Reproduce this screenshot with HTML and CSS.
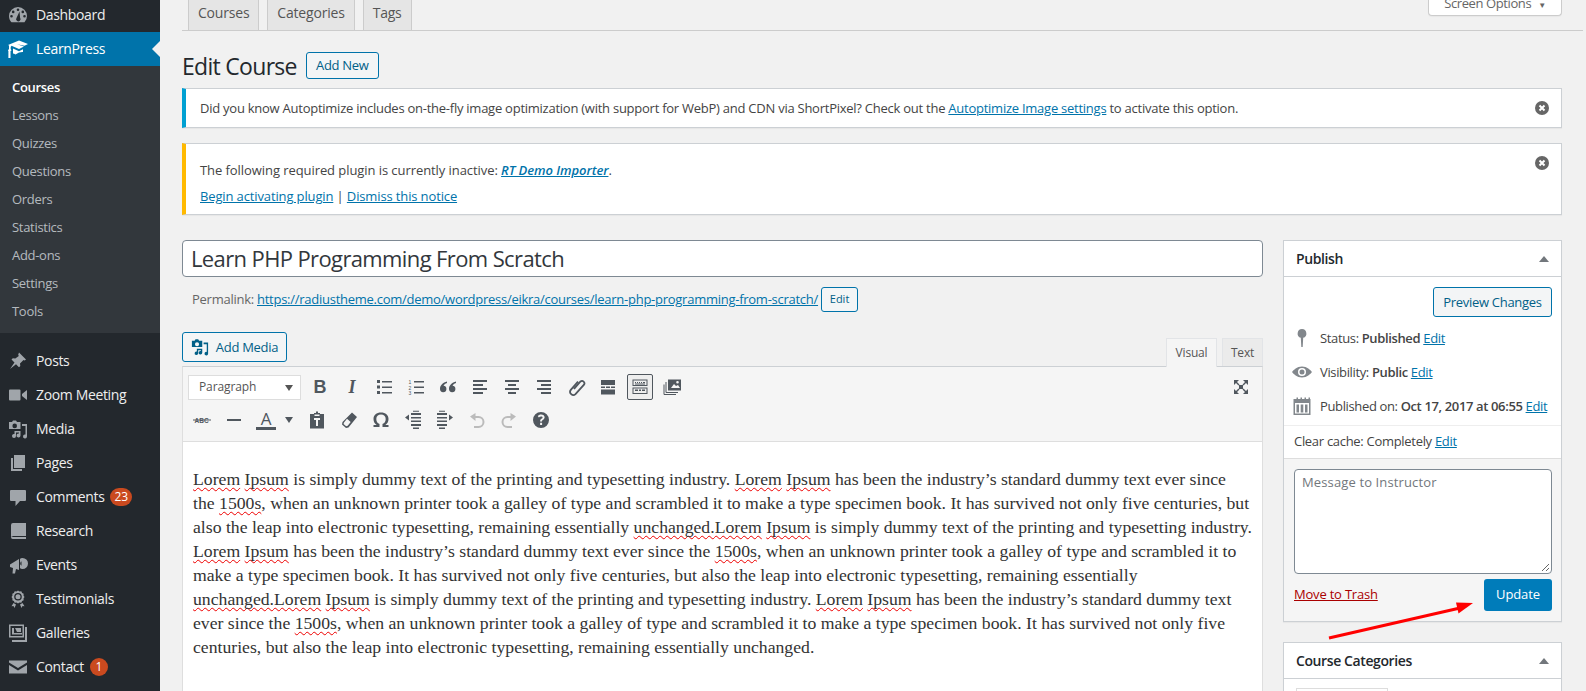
FILE: index.html
```html
<!DOCTYPE html>
<html lang="en">
<head>
<meta charset="utf-8">
<title>Edit Course</title>
<link rel="stylesheet" href="styles.css">
</head>
<body>
<div class="app">
  <aside class="sidebar">
    <a class="item dash"><svg class="mi" viewBox="0 0 20 20"><path d="M10 2a9 9 0 0 0-9 9c0 2.400.9 4.600 2.500 6.300h13A9 9 0 0 0 19 11a9 9 0 0 0-9-9zm0 1.500a1.300 1.300 0 1 1 0 2.600 1.300 1.300 0 0 1 0-2.600zM5.200 5.600a1.300 1.300 0 1 1 0 2.600 1.300 1.300 0 0 1 0-2.600zm9.600 0a1.300 1.300 0 1 1 0 2.600 1.300 1.300 0 0 1 0-2.600zM3.500 10a1.300 1.300 0 1 1 0 2.600 1.300 1.300 0 0 1 0-2.600zm13 0a1.300 1.300 0 1 1 0 2.600 1.300 1.300 0 0 1 0-2.600zM11.500 6.500l.6 6.300a2.200 2.200 0 1 1-3.600.1z" fill-rule="evenodd"/></svg>Dashboard</a>
    <a class="item active"><svg class="mi" viewBox="0 0 20 20"><path d="M11 1.500 20 5l-3.500 1.700L9 5.300l7 2.200L11 10 3.500 6.800 2.700 8v2l.8 1.500-1 .5V19H.4v-7l-.6-.6L1 10V6.500L0 6zM5 9.500l6 2.700 4-2V13c-2-.2-5 .5-7.500 2.500-1-.7-1.800-1-2.500-1.100z"/></svg>LearnPress</a>
    <nav class="sub">
      <a class="cur">Courses</a><a>Lessons</a><a>Quizzes</a><a>Questions</a><a>Orders</a><a>Statistics</a><a>Add-ons</a><a>Settings</a><a>Tools</a>
    </nav>
    <div class="sep"></div>
    <a class="item"><svg class="mi" viewBox="0 0 20 20"><path d="M11 1.500l7 7-1.300 1-1.200-.5-3.500 3.500.3 2.500-1.300 1.300-3-3L2 18l4.500-6.500-3-3 1.300-1.300 2.500.3L10.800 5l-.6-1.200z"/></svg>Posts</a>
    <a class="item"><svg class="mi" viewBox="0 0 20 20"><path d="M1 5.500q0-1 1-1h9.500q1 0 1 1v9q0 1-1 1H2q-1 0-1-1zM14 9l5-4v10l-5-4z"/></svg>Zoom Meeting</a>
    <a class="item"><svg class="mi" viewBox="0 0 20 20"><path d="M1 3h3l1-1.500h3L9 3h3.500v7H1zm5.700 1.600a2.300 2.300 0 1 0 0 4.600 2.300 2.300 0 0 0 0-4.600zM14 5h5v12.500a2 2 0 1 1-1.500-2V7H14zM6.500 12h6v4.500a2 2 0 1 1-1.500-2v-1h-3V17a2 2 0 1 1-1.500-2z" fill-rule="evenodd"/></svg>Media</a>
    <a class="item"><svg class="mi" viewBox="0 0 20 20"><path d="M6 2h11v13H6zM3 5h2v11h9v2H3z"/></svg>Pages</a>
    <a class="item"><svg class="mi" viewBox="0 0 20 20"><path d="M3 3h14q1 0 1 1v9q0 1-1 1h-5l-4.500 5v-5H3q-1 0-1-1V4q0-1 1-1z"/></svg>Comments<span class="count">23</span></a>
    <a class="item"><svg class="mi" viewBox="0 0 20 20"><path d="M5 2h13v13H5a2 2 0 0 0-2 1.500V4q0-2 2-2zM3 16.500A1.800 1.800 0 0 1 5 16h13v2H5a2 2 0 0 1-2-1.500z"/></svg>Research</a>
    <a class="item"><svg class="mi" viewBox="0 0 20 20"><path d="M2 9.500 11 4v11l-3-1-1 4.500H4.500l.5-5.500-3-1zM14.500 3a5.500 5.500 0 0 1 0 11q-2 0-2.500-1V4q.6-1 2.500-1zm0 3a2.500 2.500 0 0 0-1 4.700V6.300z" fill-rule="evenodd"/></svg>Events</a>
    <a class="item"><svg class="mi" viewBox="0 0 20 20"><path d="M10 1.500l1.500 1 1.800-.2.8 1.600 1.600.8-.2 1.800 1 1.500-1 1.500.2 1.800-1.600.8-.8 1.600-1.800-.2-1.500 1-1.500-1-1.800.2-.8-1.600-1.600-.8.2-1.800-1-1.500 1-1.500-.2-1.800 1.600-.8.8-1.600 1.800.2zM10 4a3.800 3.800 0 1 0 0 7.600A3.800 3.800 0 0 0 10 4zm0 1.300a2.500 2.500 0 1 1 0 5 2.500 2.500 0 0 1 0-5zM5.500 14l2.500 1.500L6.500 19l-1-2-2 .3zM14.500 14l2 3.300-2-.3-1 2-1.500-3.500z" fill-rule="evenodd"/></svg>Testimonials</a>
    <a class="item"><svg class="mi" viewBox="0 0 20 20"><path d="M1 1.500h15v13H1zm1.500 1.500v10h12V3zM4 5h2v5h8v1.500H4zM7 5h6v4H9zM17 4h2v15H4v-2h13z" fill-rule="evenodd"/></svg>Galleries</a>
    <a class="item"><svg class="mi" viewBox="0 0 20 20"><path d="M1 3.500h18v2L10 11 1 5.500zM1 8l9 5.500L19 8v8.500H1z"/></svg>Contact<span class="count">1</span></a>
  </aside>

  <main class="main">
    <div class="topbar">
      <div class="tabs"><a class="tab">Courses</a><a class="tab">Categories</a><a class="tab">Tags</a></div>
      <button class="screen"><span class="screen-in">Screen Options <span class="caret">▼</span></span></button>
    </div>
    <div class="wrap">
      <div class="heading"><h1>Edit Course</h1><a class="btn addnew">Add New</a></div>
      <div class="notice info">
        <p>Did you know Autoptimize includes on-the-fly image optimization (with support for WebP) and CDN via ShortPixel? Check out the <a>Autoptimize Image settings</a> to activate this option.</p>
        <svg class="close" viewBox="0 0 14 14"><circle cx="7" cy="7" r="7"/><path d="M4.500 4.500l5 5m0-5l-5 5"/></svg>
      </div>
      <div class="notice warn">
        <p>The following required plugin is currently inactive: <a class="em">RT Demo Importer</a>.</p>
        <p class="links"><a>Begin activating plugin</a> | <a>Dismiss this notice</a></p>
        <svg class="close" viewBox="0 0 14 14"><circle cx="7" cy="7" r="7"/><path d="M4.500 4.500l5 5m0-5l-5 5"/></svg>
      </div>
      <div class="columns">
        <section class="content">
          <div class="title-field">Learn PHP Programming From Scratch</div>
          <div class="permalink">Permalink: <a>https://radiustheme.com/demo/wordpress/eikra/courses/learn-php-programming-from-scratch/</a><span class="btn mini">Edit</span></div>
          <div class="editor-head">
            <a class="btn media"><svg class="ic16" viewBox="0 0 20 20"><path d="M1 3h3l1-1.500h3L9 3h3.500v7H1zm5.700 1.600a2.300 2.300 0 1 0 0 4.600 2.300 2.300 0 0 0 0-4.600zM14 5h5v12.500a2 2 0 1 1-1.500-2V7H14zM6.500 12h6v4.500a2 2 0 1 1-1.500-2v-1h-3V17a2 2 0 1 1-1.500-2z" fill-rule="evenodd"/></svg>Add Media</a>
            <div class="modes"><span class="mode on">Visual</span><span class="mode">Text</span></div>
          </div>
          <div class="editor">
            <div class="toolbar">
              <div class="row">
                <span class="select">Paragraph<i></i></span>
                <span class="tb t-b">B</span>
                <span class="tb t-i">I</span>
                <span class="tb"><svg viewBox="0 0 20 20"><path d="M3 3h3v3H3zM8 4h10v1.500H8zM3 8.500h3v3H3zM8 9.500h10V11H8zM3 14h3v3H3zM8 15h10v1.500H8z"/></svg></span>
                <span class="tb"><svg viewBox="0 0 20 20"><path d="M8 4h10v1.500H8zM8 9.500h10V11H8zM8 15h10v1.500H8z"/><text x="2.500" y="7" class="num">1</text><text x="2.500" y="12.500" class="num">2</text><text x="2.500" y="18" class="num">3</text></svg></span>
                <span class="tb"><svg viewBox="0 0 20 20"><path d="M9 4.500C5 5.500 2 8 2 12a3.200 3.200 0 1 0 3.500-3.200C6 7.500 7.500 6.500 9 6zM18 4.500C14 5.500 11 8 11 12a3.200 3.200 0 1 0 3.500-3.200c.5-1.300 2-2.300 3.500-2.800z"/></svg></span>
                <span class="tb"><svg viewBox="0 0 20 20"><path d="M3 3h14v2H3zM3 7h10v2H3zM3 11h14v2H3zM3 15h10v2H3z"/></svg></span>
                <span class="tb"><svg viewBox="0 0 20 20"><path d="M3 3h14v2H3zM6 7h8v2H6zM3 11h14v2H3zM6 15h8v2H6z"/></svg></span>
                <span class="tb"><svg viewBox="0 0 20 20"><path d="M3 3h14v2H3zM7 7h10v2H7zM3 11h14v2H3zM7 15h10v2H7z"/></svg></span>
                <span class="tb"><svg viewBox="0 0 20 20"><path class="line" d="M8 12l6.500-7.500a2.400 2.400 0 0 1 3.500 3.200l-8.500 9.500a3.200 3.200 0 0 1-4.700-4.300L12 4.500"/></svg></span>
                <span class="tb"><svg viewBox="0 0 20 20"><path d="M3 3h14v5H3zM3 9.500h4V11H3zM8 9.500h4V11H8zM13 9.500h4V11h-4zM3 12.500h14v5H3z"/></svg></span>
                <span class="tb pressed"><svg viewBox="0 0 20 20"><path d="M2.500 2.500h15v6.500h-15zm1 1v4.500h13V3.500zM5 5h1v1H5zm2 0h1v1H7zm2 0h1v1H9zm2 0h1v1h-1zm2 0h2v1h-2zM5 6.500h10V7.500H5zM2.500 10.500h15V17h-15zm1 1V16h13v-4.500zM5 12.500h3v1.500H5zm4 0h2v1.500H9zm3 0h3v1.500h-3z" fill-rule="evenodd"/></svg></span>
                <span class="tb"><svg viewBox="0 0 20 20"><path d="M6 2.500h13v11H6zM9 11l3-4 2 2 2-1 2 3zM15.500 4a1.300 1.300 0 1 0 0 2.600 1.300 1.300 0 0 0 0-2.600z" fill-rule="evenodd"/><path class="line thin" d="M4 5v10.500h12M2 7.500v10h12"/></svg></span>
                <span class="tb full"><svg viewBox="0 0 20 20"><path d="M3 3h5L6 5l2.500 2.500-1 1L5 6 3 8zM17 3v5l-2-2-2.500 2.500-1-1L14 5l-2-2zM3 17v-5l2 2 2.500-2.500 1 1L6 15l2 2zM17 17h-5l2-2-2.500-2.500 1-1L15 14l2-2zM8 8h4v4H8z"/></svg></span>
              </div>
              <div class="row row2">
                <span class="tb"><svg viewBox="0 0 20 20"><text x="2.500" y="13" class="abc">ABC</text><path d="M1 9.500h18v1H1z"/></svg></span>
                <span class="tb"><svg viewBox="0 0 20 20"><path d="M3 9h14v2H3z"/></svg></span>
                <span class="tb color"><b>A</b></span><i class="mini-caret"></i>
                <span class="tb"><svg viewBox="0 0 20 20"><path d="M7 4V3h2V1.500h2V3h2v1h4v14.500H3V4zM7 8v2h2v6h2v-6h2V8zM7.500 4.500v1.500h5V4.500z" fill-rule="evenodd"/></svg></span>
                <span class="tb"><svg viewBox="0 0 20 20"><path d="M13 2.500l5 4.500-8.500 10.500L7 18 3 14.500l.5-2.500zM5 12.500l-.5 1.500 2.700 2.300 1.500-.5 3-3.800-3.700-3.200z" fill-rule="evenodd"/></svg></span>
                <span class="tb"><svg viewBox="0 0 20 20"><path d="M2.500 17v-2h3.200C3.500 13.500 2.500 11.500 2.500 9c0-4 3-6.500 7.500-6.500S17.500 5 17.500 9c0 2.500-1 4.500-3.200 6h3.200v2h-6v-3c2-.8 3.200-2.500 3.200-5 0-3-1.800-4.500-4.700-4.500S5.300 6 5.300 9c0 2.500 1.200 4.200 3.200 5v3z"/></svg></span>
                <span class="tb"><svg viewBox="0 0 20 20"><path d="M8 3h10v2H8zM8 7h10v1.500H8zM2 7.500l4-3v6zM8 10.500h10V12H8zM8 14h10v2H8zM10 17.500h6V19h-6zM10 .7h6v1h-6z"/></svg></span>
                <span class="tb"><svg viewBox="0 0 20 20"><path d="M2 3h10v2H2zM2 7h10v1.500H2zM18 7.500l-4-3v6zM2 10.500h10V12H2zM2 14h10v2H2zM4 17.500h6V19H4zM4 .7h6v1H4z"/></svg></span>
                <span class="tb off"><svg viewBox="0 0 20 20"><path d="M8.500 3v3h3a6 6 0 0 1 0 12H7v-2h4.500a4 4 0 0 0 0-8h-3v3L3 6.500z"/></svg></span>
                <span class="tb off"><svg viewBox="0 0 20 20"><path d="M11.500 3v3h-3a6 6 0 0 0 0 12H13v-2H8.500a4 4 0 0 1 0-8h3v3L17 6.500z"/></svg></span>
                <span class="tb"><svg viewBox="0 0 20 20"><path d="M10 2a8 8 0 1 0 0 16 8 8 0 0 0 0-16zm-.9 10.800h2V15h-2zm1-8.300c2.200 0 3.500 1.100 3.500 2.800 0 1.300-.7 2-1.800 2.700-.7.500-.8.800-.8 1.500H9.100c0-1.300.3-2 1.300-2.700.8-.5 1.200-.9 1.200-1.400 0-.6-.6-1-1.500-1-.9 0-1.600.4-2.200 1L6.700 6c.8-.9 2-1.500 3.400-1.500z" fill-rule="evenodd"/></svg></span>
              </div>
            </div>
            <div class="body-text">
              <u>Lorem</u> <u>Ipsum</u> is simply dummy text of the printing and typesetting industry. <u>Lorem</u> <u>Ipsum</u> has been the industry’s standard dummy text ever since<br>
              the <u>1500s</u>, when an unknown printer took a galley of type and scrambled it to make a type specimen book. It has survived not only five centuries, but<br>
              also the leap into electronic typesetting, remaining essentially <u>unchanged.Lorem</u> <u>Ipsum</u> is simply dummy text of the printing and typesetting industry.<br>
              <u>Lorem</u> <u>Ipsum</u> has been the industry’s standard dummy text ever since the <u>1500s</u>, when an unknown printer took a galley of type and scrambled it to<br>
              make a type specimen book. It has survived not only five centuries, but also the leap into electronic typesetting, remaining essentially<br>
              <u>unchanged.Lorem</u> <u>Ipsum</u> is simply dummy text of the printing and typesetting industry. <u>Lorem</u> <u>Ipsum</u> has been the industry’s standard dummy text<br>
              ever since the <u>1500s</u>, when an unknown printer took a galley of type and scrambled it to make a type specimen book. It has survived not only five<br>
              centuries, but also the leap into electronic typesetting, remaining essentially unchanged.
            </div>
          </div>
        </section>
        <aside class="side">
          <div class="box">
            <div class="box-h"><h2>Publish</h2><i class="up"></i></div>
            <div class="pub-actions"><a class="btn preview">Preview Changes</a></div>
            <div class="misc"><svg class="pi" viewBox="0 0 20 20"><path d="M10 1a4.500 4.500 0 0 0-1.200 8.800L9.300 19h1.400l.5-9.200A4.500 4.500 0 0 0 10 1z"/></svg><span>Status: <b>Published</b> <a>Edit</a></span></div>
            <div class="misc"><svg class="pi" viewBox="0 0 20 20"><path d="M10 4.500C5 4.500 1.500 8 0 10c1.500 2 5 5.500 10 5.500S18.500 12 20 10c-1.500-2-5-5.500-10-5.500zm0 1.500a4 4 0 1 1 0 8 4 4 0 0 1 0-8zm0 1.500a2.500 2.500 0 1 0 0 5 2.500 2.500 0 0 0 0-5z" fill-rule="evenodd"/></svg><span>Visibility: <b>Public</b> <a>Edit</a></span></div>
            <div class="misc"><svg class="pi" viewBox="0 0 20 20"><path d="M2 3h2.500V1.500H6V3h2.500V1.500H10V3h2.500V1.500H14V3h2.500V1.500H18V3H18.500v16h-17V3zM3 7v10.500h14V7zM4.500 8.500h2.500v8H4.500zM8.700 8.500h2.600v8H8.700zM13 8.500h2.500v8H13z" fill-rule="evenodd"/></svg><span>Published on: <b>Oct 17, 2017 at 06:55</b> <a>Edit</a></span></div>
            <div class="cache">Clear cache: Completely <a>Edit</a></div>
            <div class="major">
              <div class="msg">Message to Instructor<svg class="grip" viewBox="0 0 10 10"><path d="M9 2 2 9M9 6 6 9"/></svg></div>
              <div class="act"><a class="trash">Move to Trash</a><a class="update">Update</a></div>
            </div>
          </div>
          <div class="box second">
            <div class="box-h"><h2>Course Categories</h2><i class="up"></i></div>
            <div class="cat-body"><span class="cat-tab"></span></div>
          </div>
        </aside>
      </div>
    </div>
  </main>
</div>
<svg class="arrow" viewBox="0 0 1586 691"><path class="shaft" d="M1329 638 1460 608"/><path class="head" d="M1473 603 1456 602.500 1458.500 613.500z"/></svg>
</body>
</html>
```

FILE: styles.css
```css
html,body{margin:0;padding:0;height:691px;overflow:hidden;background:#f1f1f1}
body{font-family:"Open Sans","Noto Sans",sans-serif;font-size:13px;color:#444;line-height:1.4}
a{color:#0073aa;text-decoration:none}
.app{display:flex;height:691px;overflow:hidden}
.sidebar{width:160px;flex:none;background:#23282d;color:#eee;margin-top:-2px;height:693px;overflow:hidden}
.item{display:flex;align-items:center;height:34px;font-size:14px;color:#eee;letter-spacing:-.35px;white-space:nowrap}
.mi{width:20px;height:20px;fill:#a0a5aa;margin:0 8px 0 8px;flex:none}
.active{background:#0073aa;color:#fff;position:relative}
.active .mi{fill:#fff}
.active::after{content:"";position:absolute;right:0;top:9px;border:8px solid transparent;border-right-color:#f1f1f1;border-left:0}
.sub{background:#32373c;padding:7px 0 8px;display:flex;flex-direction:column}
.sub a{height:28px;line-height:28px;padding-left:12px;color:rgba(240,245,250,.7);font-size:13px;letter-spacing:-.3px}
.sub .cur{color:#fff;font-weight:600}
.sep{height:11px}
.count{display:inline-block;background:#ca4a1f;color:#fff;border-radius:9px;font-size:12px;line-height:18px;height:18px;min-width:18px;text-align:center;padding:0 4px;margin-left:6px;box-sizing:border-box;letter-spacing:0}

.main{flex:1;min-width:0;display:flex;flex-direction:column}
.topbar{height:31px;margin-left:22px;margin-right:3px;border-bottom:1px solid #ccc;box-sizing:border-box;display:flex;justify-content:space-between;align-items:flex-end;overflow:hidden;flex:none}
.tabs{display:flex;gap:8px;padding-left:6px;height:30px}
.tab{background:#e5e5e5;border:1px solid #ccc;border-top:0;border-bottom:0;color:#555;font-size:14px;font-weight:400;height:30px;line-height:26px;padding:0 9px;box-sizing:border-box;letter-spacing:-.2px}
.screen{font:13px "Open Sans",sans-serif;color:#666;background:#fff;border:1px solid #ccc;border-top:0;height:16px;width:134px;padding:0;margin:0 21px 15px 0;border-radius:0 0 4px 4px;letter-spacing:-.4px;align-self:flex-start;box-shadow:0 1px 1px rgba(0,0,0,.04);overflow:hidden;display:block}
.screen-in{display:block;margin-top:-9px;line-height:18px;height:18px}
.caret{font-size:8px;margin-left:4px}
.wrap{padding:0 24px 0 22px;display:flex;flex-direction:column}
.heading{display:flex;align-items:center;height:57px;padding-top:12px;box-sizing:border-box}
h1{margin:0 9px 0 0;font-size:23px;font-weight:400;color:#23282d;letter-spacing:-.7px;line-height:32px}
.btn{display:inline-flex;align-items:center;justify-content:center;box-sizing:border-box;border:1px solid #0073aa;border-radius:3px;background:#f3f5f6;color:#016087;font-size:13px;letter-spacing:-.3px;white-space:nowrap}
.addnew{width:73px;height:27px;font-weight:400}
.notice{background:#fff;border:1px solid #ccd0d4;border-left:4px solid #00a0d2;box-shadow:0 1px 1px rgba(0,0,0,.04);position:relative;padding:0 14px;box-sizing:border-box}
.notice p{margin:0;font-size:13px;letter-spacing:-.25px;color:#444}
.notice a{text-decoration:underline}
.info{height:40px;display:flex;align-items:center}
.warn{height:72px;margin-top:15px;border-left-color:#ffb900;padding-top:17px}
.warn p{letter-spacing:-.07px}
.warn .links{margin-top:8px;letter-spacing:-.13px}
.em{font-style:italic;font-weight:600}
.close{position:absolute;right:12px;top:12px;width:14px;height:14px}
.close circle{fill:#666}
.close path{stroke:#fff;stroke-width:2;fill:none}
.columns{display:flex;gap:20px;margin-top:25px;align-items:flex-start}
.content{width:1081px;flex:none}
.side{width:279px;flex:none}
.title-field{height:37px;box-sizing:border-box;border:1px solid #7e8993;border-radius:4px;background:#fff;color:#32373c;font-size:22px;line-height:35px;padding-left:8px;letter-spacing:-.62px}
.permalink{height:26px;margin-top:9px;padding-left:10px;display:flex;align-items:center;color:#666;font-size:13px;letter-spacing:-.26px;white-space:pre}
.permalink a{text-decoration:underline}
.mini{width:37px;height:25px;font-size:11px;margin-left:3px;letter-spacing:0}
.editor-head{display:flex;justify-content:space-between;align-items:flex-end;margin-top:20px;height:34px}
.media{width:105px;height:30px;margin-bottom:4px}
.ic16{width:18px;height:18px;fill:#016087;margin-right:7px}
.modes{display:flex;gap:5px}
.mode{height:28px;box-sizing:border-box;border:1px solid #e2e4e7;border-bottom:0;background:#ebebeb;color:#555;font-size:12px;line-height:27px;text-align:center;width:41px;letter-spacing:-.2px}
.mode.on{width:51px;background:#f5f5f5;height:29px;margin-bottom:-1px}
.editor{border:1px solid #dedede;border-top-color:#ccd0d4;background:#fff;height:340px;box-sizing:border-box}
.toolbar{background:#f5f5f5;height:75px;border-bottom:1px solid #dedede;box-sizing:border-box;padding:3px 0 0 5px}
.row{display:flex;align-items:center;height:34px;position:relative}
.row2{height:30px;margin:1px 0 0 -2px}
.select{display:flex;align-items:center;width:113px;height:25px;box-sizing:border-box;background:#fff;border:1px solid #ddd;padding-left:10px;font-size:12px;color:#555;position:relative;margin-right:3px;letter-spacing:-.1px}
.select i{position:absolute;right:7px;top:9px;border:4.500px solid transparent;border-top:6px solid #555;border-bottom:0}
.tb{width:26px;height:26px;margin:0 3px;display:flex;align-items:center;justify-content:center;color:#50575e;box-sizing:border-box;flex:none}
.tb svg{width:20px;height:20px;fill:#50575e}
.tb .line{fill:none;stroke:#50575e;stroke-width:1.800}
.tb .thin{stroke-width:1}
.t-b{font:700 18px "Liberation Sans",sans-serif}
.t-i{font:italic 700 18px "Liberation Serif",serif}
.num{font:5px "Liberation Sans",sans-serif;fill:#50575e}
.abc{font:700 6.500px "Liberation Sans",sans-serif;fill:#50575e}
.pressed{border:1px solid #50575e;border-radius:2px;background:#eee}
.full{position:absolute;right:8px;top:4px;margin:0}
.off svg{fill:#bbb}
.color{flex-direction:column;font-size:17px;width:20px;margin:0 9px 0 6px}
.color b{font-weight:400;border-bottom:3px solid #50575e;line-height:17px;width:20px;text-align:center}
.mini-caret{border:4px solid transparent;border-top:6px solid #50575e;border-bottom:0;margin:0 8px 0 0}
.body-text{padding:25px 0 0 10px;font-family:"Liberation Serif",serif;font-size:17.700px;line-height:24px;color:#333;white-space:nowrap}
.body-text u{text-decoration:underline wavy #e00 1px;text-underline-offset:2px;text-decoration-skip-ink:none}
.box{background:#fff;border:1px solid #ccd0d4;box-shadow:0 1px 1px rgba(0,0,0,.04);box-sizing:border-box}
.box-h{height:36px;border-bottom:1px solid #ccd0d4;display:flex;align-items:center;justify-content:space-between;padding:0 12px 0 12px;box-sizing:border-box}
h2{margin:0;font-size:14px;font-weight:600;color:#23282d;letter-spacing:-.4px}
.up{border:5px solid transparent;border-bottom:6px solid #72777c;border-top:0}
.pub-actions{display:flex;justify-content:flex-end;padding:10px 9px 4px 0}
.preview{width:119px;height:30px}
.misc{height:34px;display:flex;align-items:center;padding-left:8px;letter-spacing:-.36px;font-size:13px;white-space:nowrap}
.misc a,.cache a{text-decoration:underline}
.misc b,.cache b{font-weight:600}
.pi{width:20px;height:20px;fill:#82878c;margin-right:8px;flex:none}
.cache{border-top:1px solid #eee;border-bottom:1px solid #ddd;height:34px;line-height:30px;padding-left:10px;box-sizing:border-box;letter-spacing:-.3px;margin-top:2px}
.major{background:#f5f5f5;padding:10px 9px 0 10px;height:162px;box-sizing:border-box}
.msg{height:105px;box-sizing:border-box;border:1px solid #7e8993;border-radius:4px;background:#fff;color:#72777c;padding:3px 7px;font-size:13px;position:relative;letter-spacing:.13px}
.grip{position:absolute;right:1px;bottom:1px;width:10px;height:10px;fill:none;stroke:#666;stroke-width:1}
.act{display:flex;justify-content:space-between;align-items:flex-start;margin-top:5px}
.trash{color:#a00;text-decoration:underline;margin-top:6px;letter-spacing:-.2px}
.update{width:68px;height:32px;background:#007cba;color:#fff;border-radius:3px;text-align:center;line-height:31px;letter-spacing:-.1px}
.second{margin-top:20px;height:80px}
.cat-body{padding:9px 12px}
.cat-tab{display:block;width:90px;height:10px;border:1px solid #ddd;border-bottom:0;background:#fff}
.arrow{position:absolute;left:0;top:0;width:1586px;height:691px;pointer-events:none}
.shaft{fill:none;stroke:#f00;stroke-width:3}
.head{fill:#f00}
```
